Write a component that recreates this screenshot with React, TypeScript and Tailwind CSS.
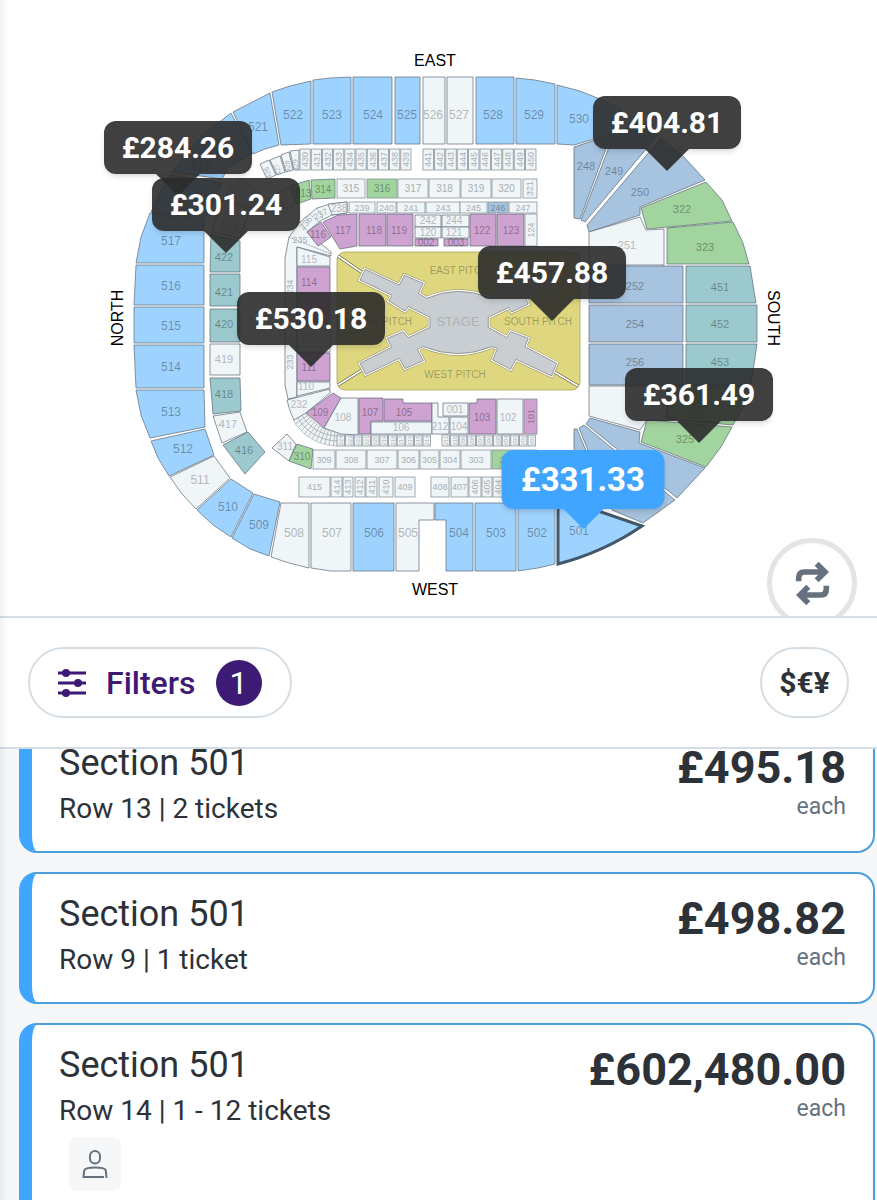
import { clsx } from 'clsx';

type Tone = 'sky' | 'steel' | 'teal' | 'green' | 'purple' | 'empty';

const fills: Record<Tone, string> = {
  sky: 'fill-[#9fd3ff]',
  steel: 'fill-[#a6c3df]',
  teal: 'fill-[#9bc9cd]',
  green: 'fill-[#a1d49e]',
  purple: 'fill-[#cea3d1]',
  empty: 'fill-[#f0f5f8]',
};

// label, tone, polygon points, label x, label y
type Shape = [string, Tone, string, number, number];

const upper: Shape[] = [
  ['', 'sky', '231,113 252,153 230,167 200,137', 222, 143],
  ['519', 'sky', '198,139 228,168 222,179 172,172', 201, 171],
  ['', 'sky', '170,175 222,183 205,219 151,212 159,194', 187, 205],
  ['517', 'sky', '150,213 204,221 204,263 136,263 141,237', 171, 245],
  ['516', 'sky', '136,265 204,265 204,305 134,305', 171, 290],
  ['515', 'sky', '134,307 204,307 204,343 134,343', 171, 330],
  ['514', 'sky', '134,345 204,345 204,388 136,388', 171, 371],
  ['513', 'sky', '136,390 204,390 205,427 150,438 141,415', 171, 416],
  ['512', 'sky', '151,441 205,429 214,455 169,476 158,458', 183, 453],
  ['511', 'empty', '170,477 214,456 230,478 196,509 182,494', 200, 484],
  ['510', 'sky', '231,479 253,493 231,537 213,525 197,510', 228, 511],
  ['509', 'sky', '254,494 280,502 269,556 250,549 232,538', 259, 529],
  ['508', 'empty', '281,503 309,503 309,568 289,563 271,557', 294, 537],
  ['507', 'empty', '311,503 351,503 351,571 331,571 311,568', 332, 537],
  ['506', 'sky', '353,503 394,503 394,571 353,571', 374, 537],
  ['505', 'empty', '396,503 434,503 434,520 419,520 419,571 396,571', 408, 537],
  ['504', 'sky', '435,503 473,503 473,571 446,571 446,520 435,520', 459, 537],
  ['503', 'sky', '475,503 516,503 516,571 475,571', 496, 537],
  ['502', 'sky', '518,503 555,503 555,564 538,568 518,571', 537, 537],
  ['521', 'sky', '233,112 270,93 279,145 265,149 253,154', 258, 131],
  ['522', 'sky', '272,92 290,86 311,81 311,144 281,145', 293, 119],
  ['523', 'sky', '313,80 330,78 351,77 351,144 313,144', 332, 119],
  ['524', 'sky', '353,77 392,77 392,144 353,144', 373, 119],
  ['525', 'sky', '395,77 420,77 420,144 395,144', 407, 119],
  ['526', 'empty', '423,77 445,77 445,144 423,144', 433, 119],
  ['527', 'empty', '447,77 473,77 473,144 447,144', 459, 119],
  ['528', 'sky', '476,77 514,77 514,144 476,144', 493, 119],
  ['529', 'sky', '516,78 535,80 555,84 555,144 516,144', 534, 119],
  ['530', 'sky', '557,85 580,91 600,99 621,109 611,134 574,145 557,144', 579, 123],
];

const wings: Shape[] = [
  ['', 'empty', '223,198 240,178 262,195 251,208', 240, 198],
  ['423', 'empty', '212,232 222,200 250,210 240,238', 229, 231],
  ['422', 'teal', '211,235 240,241 240,272 210,272', 224, 261],
  ['421', 'teal', '210,274 240,274 240,306 210,306', 224, 296],
  ['420', 'teal', '210,309 240,309 240,342 210,342', 224, 328],
  ['419', 'empty', '210,344 240,344 240,375 210,375', 224, 363],
  ['418', 'teal', '210,378 240,378 241,411 213,414', 224, 398],
  ['417', 'empty', '213,416 240,412 247,432 222,443', 228, 428],
  ['416', 'teal', '223,445 248,432 265,452 245,474', 244, 454],
  ['248', 'steel', '574,147 611,135 580,219 574,218', 586, 170],
  ['249', 'steel', '614,134 640,122 658,135 585,222 581,220', 614, 175],
  ['250', 'steel', '661,138 684,157 705,180 640,207 640,215 589,232 587,225', 640, 196],
  ['251', 'empty', '589,232 640,217 646,230 664,229 664,265 589,265', 627, 249],
  ['322', 'green', '641,208 706,182 722,200 732,221 647,229', 682, 213],
  ['323', 'green', '667,228 733,222 743,243 749,264 667,264', 705, 251],
  ['252', 'steel', '589,266 683,266 683,303 589,303', 635, 290],
  ['254', 'steel', '589,305 683,305 683,342 589,342', 635, 328],
  ['256', 'steel', '589,344 683,344 683,385 589,385', 635, 366],
  ['257', 'empty', '589,386 666,386 666,420 647,420 640,430 589,416', 635, 407],
  ['451', 'teal', '686,266 750,266 756,303 686,303', 720, 291],
  ['452', 'teal', '686,305 757,305 757,342 686,342', 720, 328],
  ['453', 'teal', '686,344 757,344 751,385 686,385', 720, 366],
  ['324', 'green', '667,386 751,386 744,406 733,425 667,419', 700, 409],
  ['325', 'green', '647,420 732,427 721,447 706,467 641,442', 685, 443],
  ['', 'steel', '590,418 640,432 639,443 705,468 677,498 586,424', 640, 460],
  ['', 'steel', '584,425 675,500 643,523 612,510 579,428', 620, 480],
  ['', 'steel', '574,429 577,429 610,508 574,500', 590, 480],
];

const bowl: Shape[] = [
  ['', 'empty', '260,164 269,160 276,175 267,179', 0, 0],
  ['', 'empty', '270,160 280,156 285,172 277,175', 0, 0],
  ['', 'empty', '281,155 289,152 293,170 286,172', 0, 0],
  ['', 'empty', '290,151 299,150 299,170 294,170', 0, 0],
  ['', 'empty', '276,194 289,187 296,204 286,210', 286, 203],
  ['313', 'green', '290,186 309,180 311,199 297,204', 303, 197],
  ['314', 'green', '311,180 335,179 335,198 312,199', 323, 193],
  ['', 'empty', '285,258 289,237 300,222 317,208 330,204 347,202 347,213 332,215 320,221 307,232 331,252 331,256 297,247 297,397 288,399 285,385', 0, 0],
  ['238', 'empty', '328,204 347,202 347,213 332,215', 339, 212],
  ['115', 'empty', '297,247 330,257 330,266 297,266', 309, 263],
  ['114', 'purple', '297,267 330,267 330,295 297,295', 309, 286],
  ['', 'purple', '297,297 330,297 330,322 297,322', 309, 313],
  ['112', 'empty', '297,324 330,324 330,352 297,352', 309, 341],
  ['111', 'purple', '297,353 330,353 330,381 297,381', 309, 371],
  ['110', 'empty', '297,382 330,382 330,388 297,396', 306, 390],
  ['232', 'empty', '287,400 330,389 330,393 306,413 294,420 290,411', 299, 408],
  ['116', 'purple', '307,232 321,222 331,237 318,246', 318, 238],
  ['117', 'purple', '323,222 338,215 357,214 357,246 340,249', 343, 234],
  ['118', 'purple', '359,214 386,214 386,246 359,246', 374, 234],
  ['119', 'purple', '387,214 413,214 413,246 387,246', 399, 234],
  ['122', 'purple', '470,214 496,214 496,246 470,246', 482, 234],
  ['123', 'purple', '497,214 524,214 524,246 497,246', 511, 234],
  ['242', 'empty', '415,215 441,215 441,227 415,227', 428, 224],
  ['120', 'empty', '415,227 441,227 441,238 415,238', 428, 236],
  ['244', 'empty', '442,215 469,215 469,227 442,227', 454, 224],
  ['121', 'empty', '442,227 469,227 469,238 442,238', 454, 236],
  ['002', 'purple', '415,239 438,239 438,246 415,246', 426, 246],
  ['003', 'purple', '444,239 468,239 468,246 444,246', 456, 246],
  ['109', 'purple', '333,393 341,398 324,428 306,413', 320, 416],
  ['108', 'empty', '341,398 358,398 358,435 341,434 324,428', 343, 421],
  ['107', 'purple', '359,398 383,398 383,421 371,421 371,434 359,434', 370, 416],
  ['105', 'purple', '384,399 403,399 403,403 432,403 432,421 384,421', 404, 416],
  ['106', 'empty', '371,422 432,422 432,434 371,434', 401, 431],
  ['212', 'empty', '432,403 438,403 438,417 449,417 449,434 432,434', 440, 430],
  ['001', 'empty', '443,403 468,403 468,416 443,416', 455, 413],
  ['104', 'empty', '450,417 468,417 468,434 450,434', 459, 430],
  ['103', 'purple', '469,403 477,403 477,399 496,399 496,434 469,434', 482, 421],
  ['102', 'empty', '497,399 523,399 523,434 497,434', 508, 421],
  ['311', 'empty', '287,434 296,444 289,461 272,448', 285, 450],
  ['310', 'green', '297,444 313,449 311,469 289,461', 302, 460],
];

// label, x, width, optional tone
type Cell = [string, number, number, Tone?];

const row300: Cell[] = [
  ['315', 337, 28], ['316', 367, 30, 'green'], ['317', 398, 30], ['318', 429, 31],
  ['319', 461, 30], ['320', 492, 29],
];
const row200: Cell[] = [
  ['239', 349, 26], ['240', 377, 19], ['241', 397, 28], ['243', 426, 34],
  ['245', 460, 27], ['246', 488, 20, 'steel'], ['247', 509, 28],
];
const row300West: Cell[] = [
  ['309', 313, 22], ['308', 336, 30], ['307', 367, 30], ['306', 398, 21], ['305', 420, 19],
  ['304', 440, 20], ['303', 461, 30], ['302', 492, 30, 'green'], ['', 523, 14],
];
const row400West: Cell[] = [['415', 299, 31], ['409', 395, 20], ['408', 431, 18], ['407', 451, 17]];
const row400WestNarrow: Cell[] = [
  ['414', 331, 11], ['413', 343, 10], ['412', 355, 10], ['411', 366, 11], ['410', 379, 14],
  ['406', 469, 12], ['405', 482, 10], ['404', 493, 10], ['', 504, 10],
];

const narrow = (from: number, count: number, x: number, step: number, dir = 1): Cell[] =>
  Array.from({ length: count }, (_, i) => [String(from + i * dir), x + i * step, step - 1]);

const pins = [
  { price: '£284.26', x: 178, y: 196 },
  { price: '£301.24', x: 226, y: 253 },
  { price: '£404.81', x: 667, y: 171 },
  { price: '£457.88', x: 552, y: 321 },
  { price: '£530.18', x: 311, y: 367 },
  { price: '£361.49', x: 699, y: 443 },
  { price: '£331.33', x: 583, y: 529, active: true },
];

const listings = [
  { section: 'Section 501', row: 'Row 13', tickets: '2 tickets', price: '£495.18' },
  { section: 'Section 501', row: 'Row 9', tickets: '1 ticket', price: '£498.82' },
  { section: 'Section 501', row: 'Row 14', tickets: '1 - 12 tickets', price: '£602,480.00', badge: true },
];

function Sections({ items, size }: { items: Shape[]; size: string }) {
  return (
    <g className={size}>
      {items.map(([label, tone, points, x, y], i) => (
        <g key={i}>
          <polygon points={points} className={clsx(fills[tone], 'stroke-[#5b6975]')} strokeWidth={0.7} />
          {label && (
            <text x={x} y={y} textAnchor="middle" className={tone === 'empty' ? 'fill-[#b3b8bc]' : 'fill-black/35'}>
              {label}
            </text>
          )}
        </g>
      ))}
    </g>
  );
}

function Row({ cells, y, h, size, turned }: { cells: Cell[]; y: number; h: number; size: string; turned?: boolean }) {
  return (
    <g className={size}>
      {cells.map(([label, x, w, tone = 'empty'], i) => {
        const cx = x + w / 2;
        const cy = y + h / 2;
        return (
          <g key={i}>
            <rect x={x} y={y} width={w} height={h} className={clsx(fills[tone], 'stroke-[#7d868d]')} strokeWidth={0.7} />
            <text
              x={cx}
              y={cy}
              dy="0.36em"
              textAnchor="middle"
              transform={turned ? `rotate(-90 ${cx} ${cy})` : undefined}
              className={tone === 'empty' ? 'fill-[#a9afb4]' : 'fill-black/35'}
            >
              {label}
            </text>
          </g>
        );
      })}
    </g>
  );
}

function Stage() {
  return (
    <g>
      <rect x="337" y="252" width="243" height="138" rx="8" className="fill-[#ded77f] stroke-[#a39c4c]" strokeWidth={0.7} />
      <g className="stroke-[#4b4a35]" strokeWidth={2.8}>
        <path d="M338 256L370 278M338 385L370 365M579 256L546 278M578 386L546 367" />
      </g>
      <g className="stroke-white" strokeWidth={2}>
        <path d="M338 256L370 278M338 385L370 365M579 256L546 278M578 386L546 367" />
      </g>
      <g className="fill-black/30 text-[10px]" textAnchor="middle">
        <text x="459" y="274">EAST PITCH</text>
        <text x="378" y="325">NORTH PITCH</text>
        <text x="538" y="325">SOUTH PITCH</text>
        <text x="455" y="378">WEST PITCH</text>
      </g>
      <g transform="translate(270 230) scale(0.3333)" strokeLinejoin="miter">
        {[
          'stroke-[#8f8b5c] [stroke-width:12px]',
          'stroke-white [stroke-width:9px]',
          'stroke-[#73736c] [stroke-width:2px]',
        ].map((stroke) => (
          <path
            key={stroke}
            className={clsx('fill-[#c9ced2]', stroke)}
            d="M285 118L388 165L403 136L460 160L445 190L470 205Q565 163 664 205L689 190L674 160L731 136L746 165L849 118L864 150L768 205L775 222L725 246L715 233L655 262V292L710 323L722 305L775 325L765 350L860 400L845 438L738 388L722 418L668 390L683 355L665 350Q565 392 460 350L442 358L460 392L405 416L388 385L287 433L270 400L365 352L352 325L400 305L415 323L480 292V262L415 230L405 243L356 213L366 196L270 150Z"
          />
        ))}
      </g>
      <text x="458" y="326" textAnchor="middle" className="fill-[#adb1b4] text-[13px]">STAGE</text>
    </g>
  );
}

// tiny blocks that follow the south-west bend of the lower tier
function Bend() {
  return (
    <g className="fill-[#f0f5f8] stroke-[#9fa6ab]" strokeWidth={0.6}>
      {Array.from({ length: 12 }, (_, i) => {
        const angle = (deg: number, r: number) => {
          const a = (deg * Math.PI) / 180;
          return `${338 + r * Math.cos(a)},${394 + r * Math.sin(a)}`;
        };
        const from = 90 + i * 5;
        return (
          <g key={i}>
            <polygon points={[angle(from, 37), angle(from, 42), angle(from + 5, 42), angle(from + 5, 37)].join(' ')} />
            <polygon points={[angle(from, 42), angle(from, 47), angle(from + 5, 47), angle(from + 5, 42)].join(' ')} />
            <polygon points={[angle(from, 47), angle(from, 52), angle(from + 5, 52), angle(from + 5, 47)].join(' ')} />
          </g>
        );
      })}
    </g>
  );
}

function SeatMap() {
  return (
    <svg viewBox="0 0 877 616" className="block w-full font-['Liberation_Sans',sans-serif]" role="img" aria-label="Seating plan">
      <g className="fill-black text-[16px]" textAnchor="middle">
        <text x="435" y="66">EAST</text>
        <text x="435" y="595">WEST</text>
        <text transform="translate(123 318) rotate(-90)">NORTH</text>
        <text transform="translate(768 318) rotate(90)">SOUTH</text>
      </g>
      <Sections items={upper} size="text-[12px]" />
      <Sections items={wings} size="text-[11px]" />
      <Bend />
      <Sections items={bowl} size="text-[10px]" />
      <Row cells={narrow(430, 10, 300, 11.2)} y={149} h={21} size="text-[9px]" turned />
      <Row cells={narrow(441, 10, 423, 11.4)} y={149} h={21} size="text-[9px]" turned />
      <Row cells={row300} y={179} h={19} size="text-[10px]" />
      <Row cells={[['321', 523, 14]]} y={179} h={19} size="text-[9px]" turned />
      <Row cells={row200} y={202} h={11} size="text-[9px]" />
      <Row cells={[['124', 525, 12]]} y={214} h={32} size="text-[9px]" turned />
      <Row cells={[['101', 524, 13, 'purple']]} y={399} h={35} size="text-[9px]" turned />
      <Row cells={narrow(224, 11, 337, 8.6, -1)} y={435} h={11} size="text-[6px]" turned />
      <Row cells={narrow(211, 11, 442, 8.6, -1)} y={435} h={11} size="text-[6px]" turned />
      <Row cells={row300West} y={450} h={19} size="text-[9px]" />
      <Row cells={row400West} y={477} h={20} size="text-[9px]" />
      <Row cells={row400WestNarrow} y={477} h={20} size="text-[9px]" turned />
      <g className="stroke-[#6b747b]" strokeWidth={0.6} strokeDasharray="2 1">
        <path d="M289 237L331 254M300 222L308 232M309 214L320 222M317 208L323 219" />
      </g>
      <g className="fill-[#a9afb4] text-[9px]" textAnchor="middle">
        <text x="300" y="243">235</text>
        <text transform="translate(308 225) rotate(-50)">236</text>
        <text transform="translate(322 217) rotate(-28)">237</text>
        <text transform="translate(293 287) rotate(-90)">234</text>
        <text transform="translate(293 362) rotate(-90)">233</text>
        <text className="text-[7px]" transform="translate(270 172) rotate(-110)">426</text>
        <text className="text-[7px]" transform="translate(280 169) rotate(-108)">427</text>
        <text className="text-[7px]" transform="translate(290 166) rotate(-100)">428</text>
        <text className="text-[7px]" transform="translate(298 165) rotate(-94)">429</text>
      </g>
      <Stage />
      <path d="M558 503L575 503L642 526Q604 552 558 564Z" className="fill-[#9fd3ff] stroke-[#42576a]" strokeWidth={3} />
      <text x="579" y="535" textAnchor="middle" className="fill-black/35 text-[12px]">501</text>
    </svg>
  );
}

function Pin({ price, x, y, active }: { price: string; x: number; y: number; active?: boolean }) {
  return (
    <button
      className="absolute flex -translate-x-1/2 -translate-y-full flex-col items-center"
      style={{ left: `${(x / 877) * 100}%`, top: `${(y / 616) * 100}%` }}
    >
      <span
        className={clsx(
          'flex items-center justify-center rounded-xl font-bold text-white shadow-md',
          active ? 'h-[59px] w-[163px] bg-[#40a5ff] text-[33px]' : 'h-[53px] w-[148px] bg-[#2b2b2b]/90 text-[30px]'
        )}
      >
        {price}
      </span>
      <span
        className={clsx(
          'border-x-transparent',
          active ? 'border-x-20 border-t-20 border-t-[#40a5ff]' : 'border-x-22 border-t-22 border-t-[#2b2b2b]/90'
        )}
      />
    </button>
  );
}

function Listing({ section, row, tickets, price, badge }: (typeof listings)[number]) {
  return (
    <article className="flex justify-between rounded-[18px] border-2 border-l-[13px] border-[#4a9fdb] border-l-[#40a5ff] bg-white px-[27px] pt-5 pb-6">
      <div>
        <h2 className="text-[36px] leading-10">{section}</h2>
        <p className="mt-2 text-[28px] leading-9">{row} | {tickets}</p>
        {badge && (
          <div className="mt-2 ml-[10px] flex h-[54px] w-[52px] items-center justify-center rounded-lg bg-[#f5f7f9]">
            <svg viewBox="0 0 26 30" className="h-[30px] w-[26px] fill-none stroke-[#667180]" strokeWidth={2}>
              <rect x="8" y="2" width="10" height="12.500" rx="5" />
              <path d="M24.500 29L23.800 21.500Q23 18.500 13 18.500Q3 18.500 2.200 21.500L1.500 28H22" />
            </svg>
          </div>
        )}
      </div>
      <div className="text-right">
        <p className="text-[45px] leading-[50px] font-bold">{price}</p>
        <p className="mt-0.5 text-[23px] leading-6 text-[#667180]">each</p>
      </div>
    </article>
  );
}

export default function App() {
  return (
    <div className="relative flex h-screen flex-col overflow-hidden bg-white font-[Roboto,sans-serif] text-[#2d3238]">
      <section className="relative shrink-0 overflow-hidden">
        <div className="relative mx-auto max-w-[877px]">
          <SeatMap />
          {pins.map((pin) => (
            <Pin key={pin.price} {...pin} />
          ))}
        </div>
        <button
          aria-label="Reset map"
          className="absolute right-5 -bottom-3 flex size-[90px] items-center justify-center rounded-full border-5 border-[#e4e4e4] bg-white"
        >
          <svg viewBox="0 0 105 135" className="h-[45px] w-[35px] fill-none stroke-[#667180]" strokeWidth={17}>
            <path d="M11 61V52Q11 33 28 33H88M65 8L90 33L65 58" />
            <path d="M94 74V83Q94 102 77 102H17M40 77L15 102L40 127" />
          </svg>
        </button>
      </section>

      <div className="flex shrink-0 items-center justify-between border-y-2 border-[#d5dde4] px-7 py-[29px]">
        <button className="flex h-[71px] items-center rounded-full border-2 border-[#d5dde4] px-7 text-[#3d1a73]">
          <svg viewBox="0 0 28 28" className="size-7 fill-current stroke-current" strokeWidth={3}>
            <path d="M0 4H28M0 14H28M0 24H28" />
            <circle cx="8" cy="4" r="2.500" />
            <circle cx="20" cy="14" r="2.500" />
            <circle cx="8" cy="24" r="2.500" />
          </svg>
          <span className="ml-5 text-[32px] font-medium">Filters</span>
          <span className="ml-5 flex size-[46px] items-center justify-center rounded-full bg-[#3d1a73] text-[32px] text-white">1</span>
        </button>
        <button className="flex h-[71px] w-[89px] items-center justify-center rounded-full border-2 border-[#d5dde4] text-[30px] font-bold">
          $€¥
        </button>
      </div>

      <main className="min-h-0 flex-1 overflow-y-auto bg-[#f5f7f8] pr-[2px] pl-[19px] [scrollbar-width:none]">
        <div className="-mt-7 flex flex-col gap-[19px]">
          {listings.map((listing) => (
            <Listing key={listing.price} {...listing} />
          ))}
        </div>
      </main>

      <div className="pointer-events-none absolute inset-y-0 left-0 w-2 bg-linear-to-r from-black/5 to-transparent" />
    </div>
  );
}
